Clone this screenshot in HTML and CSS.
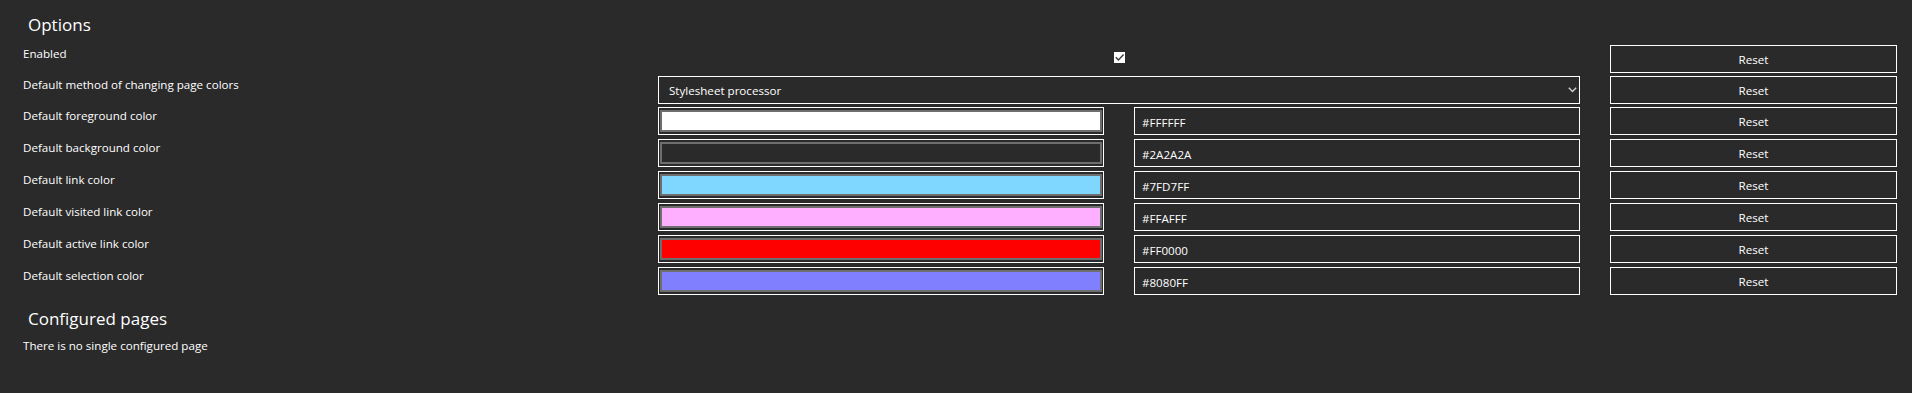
FILE: index.html
```html
<!DOCTYPE html>
<html lang="en">
<head>
<meta charset="utf-8">
<title>Options</title>
<link rel="stylesheet" href="styles.css">
</head>
<body>
<main class="page">
  <h2 class="heading">Options</h2>
  <div class="options">
    <div class="label">Enabled</div>
    <div class="wide check-cell">
      <span class="checkbox" role="checkbox" aria-checked="true">
        <svg width="11" height="11" viewBox="0 0 11 11"><path d="M1.8 5.2 L4.4 7.9 L9.6 2.4" fill="none" stroke="#3a3a3a" stroke-width="1.4"/></svg>
      </span>
    </div>
    <button class="reset">Reset</button>

    <div class="label">Default method of changing page colors</div>
    <div class="wide select-wrap">
      <select class="select"><option>Stylesheet processor</option></select>
      <svg class="chevron" width="9" height="6" viewBox="0 0 9 6"><path d="M0.8 0.8 L4.5 4.6 L8.2 0.8" fill="none" stroke="#cfcfcf" stroke-width="1.4"/></svg>
    </div>
    <button class="reset">Reset</button>

    <div class="label">Default foreground color</div>
    <div class="swatch"><div class="swatch-fill" style="background:#FFFFFF"></div></div>
    <input class="hex" type="text" value="#FFFFFF">
    <button class="reset">Reset</button>

    <div class="label">Default background color</div>
    <div class="swatch"><div class="swatch-fill" style="background:#2A2A2A"></div></div>
    <input class="hex" type="text" value="#2A2A2A">
    <button class="reset">Reset</button>

    <div class="label">Default link color</div>
    <div class="swatch"><div class="swatch-fill" style="background:#7FD7FF"></div></div>
    <input class="hex" type="text" value="#7FD7FF">
    <button class="reset">Reset</button>

    <div class="label">Default visited link color</div>
    <div class="swatch"><div class="swatch-fill" style="background:#FFAFFF"></div></div>
    <input class="hex" type="text" value="#FFAFFF">
    <button class="reset">Reset</button>

    <div class="label">Default active link color</div>
    <div class="swatch"><div class="swatch-fill" style="background:#FF0000"></div></div>
    <input class="hex" type="text" value="#FF0000">
    <button class="reset">Reset</button>

    <div class="label">Default selection color</div>
    <div class="swatch"><div class="swatch-fill" style="background:#8080FF"></div></div>
    <input class="hex" type="text" value="#8080FF">
    <button class="reset">Reset</button>
  </div>
  <h2 class="heading heading-second">Configured pages</h2>
  <p class="note">There is no single configured page</p>
</main>
</body>
</html>
```

FILE: styles.css
```css
html, body {
  margin: 0;
  padding: 0;
  background: #2a2a2a;
}

body {
  color: #ffffff;
  font-family: "Open Sans", "Noto Sans", sans-serif;
  font-size: 11.6px;
  line-height: 16px;
}

.page {
  padding: 13px 0 0 0;
}

.heading {
  margin: 0;
  padding-left: 28px;
  font-size: 17px;
  font-weight: normal;
  line-height: 23px;
}

.heading-second {
  margin-top: 8px;
}

.options {
  margin-top: 9px;
  padding-left: 23px;
  display: grid;
  grid-template-columns: 605px 446px 446px 287px;
  grid-template-rows: 31px 31px repeat(6, 32px);
  column-gap: 30px;
}

.label {
  padding-top: 0.5px;
  white-space: nowrap;
}

.wide {
  grid-column: span 2;
}

.check-cell {
  display: flex;
  justify-content: center;
  align-items: flex-start;
  padding-top: 7px;
}

.checkbox {
  display: block;
  width: 11px;
  height: 11px;
  background: #ffffff;
}

.checkbox svg {
  display: block;
}

.select-wrap {
  position: relative;
  height: 28px;
}

.select {
  -webkit-appearance: none;
  appearance: none;
  box-sizing: border-box;
  width: 100%;
  height: 28px;
  margin: 0;
  padding: 2px 0 0 10px;
  border: 1px solid #ffffff;
  border-radius: 0;
  background: #2a2a2a;
  color: #ffffff;
  font: inherit;
  outline: none;
}

.chevron {
  position: absolute;
  right: 3px;
  top: 11px;
  pointer-events: none;
}

.swatch {
  box-sizing: border-box;
  height: 28px;
  border: 1px solid #ffffff;
  padding: 2px 1px;
}

.swatch-fill {
  box-sizing: border-box;
  height: 100%;
  border: 2px solid #6e6e6e;
}

.hex {
  box-sizing: border-box;
  width: 100%;
  height: 28px;
  margin: 0;
  padding: 2px 7px 0 7px;
  border: 1px solid #ffffff;
  border-radius: 0;
  background: #2a2a2a;
  color: #ffffff;
  font: inherit;
  outline: none;
}

.reset {
  box-sizing: border-box;
  width: 100%;
  height: 28px;
  margin: 0;
  padding: 2px 0 0 0;
  border: 1px solid #ffffff;
  border-radius: 0;
  background: #2a2a2a;
  color: #ffffff;
  font: inherit;
  cursor: pointer;
}

.note {
  margin: 8px 0 0 0;
  padding-left: 23px;
}
```
